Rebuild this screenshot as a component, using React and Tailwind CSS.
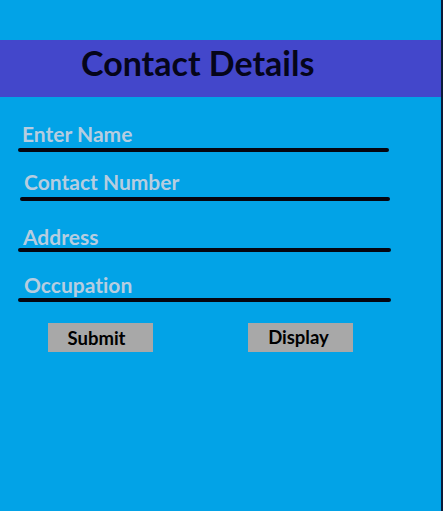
export default function App() {
  const fields = [
    { label: 'Enter Name', top: 'mt-[26px]', gap: 'mt-[3px]', pl: 'pl-[22px]', line: 'ml-[18px] w-[371px]' },
    { label: 'Contact Number', top: 'mt-[19px]', gap: 'mt-[4px]', pl: 'pl-[24px]', line: 'ml-[20px] w-[370px]' },
    { label: 'Address', top: 'mt-[25px]', gap: 'mt-[0px]', pl: 'pl-[23px]', line: 'ml-[18px] w-[373px]' },
    { label: 'Occupation', top: 'mt-[22px]', gap: 'mt-[2px]', pl: 'pl-[24px]', line: 'ml-[18px] w-[373px]' },
  ];

  return (
    <div
      className="w-[443px] h-[511px] bg-[#02a3e7] border-r-2 border-[#0b1b3a] pt-[40px] overflow-hidden [font-variant-ligatures:none]"
      style={{ fontFamily: 'Lato, "Open Sans", sans-serif' }}
    >
      <div className="h-[57px] bg-[#4347cb] pl-[81px] pt-[6px]">
        <h1 className="text-[34px] font-bold text-[#05051a] leading-none">Contact Details</h1>
      </div>

      {fields.map((f) => (
        <div key={f.label} className={f.top}>
          <div className={f.pl}>
            <span className="text-[21px] font-bold text-[#b6cde0] leading-[22px] block">{f.label}</span>
          </div>
          <div className={`${f.gap} ${f.line} h-[4px] rounded-full bg-[#05050f]`}></div>
        </div>
      ))}

      <div className="mt-[21px] flex">
        <button className="ml-[48px] w-[105px] h-[29px] bg-[#a8a8a8] text-[18.5px] font-bold text-black leading-none pr-[8px] pt-[1px]">
          Submit
        </button>
        <button className="ml-[95px] w-[105px] h-[29px] bg-[#a8a8a8] text-[18.5px] font-bold text-black leading-none pr-[4px]">
          Display
        </button>
      </div>
    </div>
  );
}
